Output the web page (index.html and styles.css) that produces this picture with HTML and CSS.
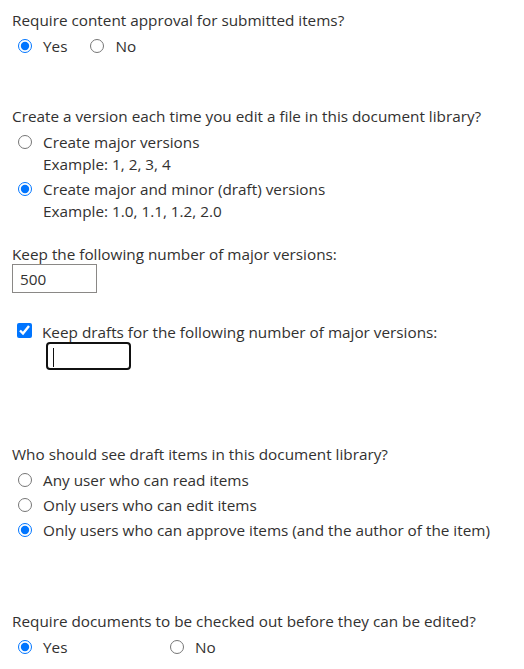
FILE: index.html
```html
<!DOCTYPE html>
<html lang="en">
<head>
    <meta charset="UTF-8">
    <meta name="viewport" content="width=device-width, initial-scale=1.0">
    <title>Versioning Settings</title>
    <link rel="stylesheet" href="styles.css">
</head>
<body>
    <form class="settings">
        <!-- Content approval -->
        <section class="setting setting-approval">
            <div class="question">Require content approval for submitted items?</div>
            <div class="choices">
                <label class="choice"><input type="radio" name="approval" checked> Yes</label>
                <label class="choice"><input type="radio" name="approval"> No</label>
            </div>
        </section>

        <!-- Versioning -->
        <section class="setting setting-versions">
            <div class="question">Create a version each time you edit a file in this document library?</div>
            <div class="option-group">
                <label class="choice"><input type="radio" name="versions"> Create major versions</label>
                <div class="example">Example: 1, 2, 3, 4</div>
            </div>
            <div class="option-group">
                <label class="choice"><input type="radio" name="versions" checked> Create major and minor (draft) versions</label>
                <div class="example">Example: 1.0, 1.1, 1.2, 2.0</div>
            </div>
        </section>

        <!-- Limits -->
        <section class="setting setting-limits">
            <div class="field-label">Keep the following number of major versions:</div>
            <input class="field" type="text" value="500">
            <label class="check"><input type="checkbox" checked> Keep drafts for the following number of major versions:</label>
            <div class="field field-focus"><span class="caret"></span></div>
        </section>

        <!-- Draft security -->
        <section class="setting setting-drafts">
            <div class="question">Who should see draft items in this document library?</div>
            <label class="choice"><input type="radio" name="drafts"> Any user who can read items</label>
            <label class="choice"><input type="radio" name="drafts"> Only users who can edit items</label>
            <label class="choice"><input type="radio" name="drafts" checked> Only users who can approve items (and the author of the item)</label>
        </section>

        <!-- Check out -->
        <section class="setting setting-checkout">
            <div class="question">Require documents to be checked out before they can be edited?</div>
            <div class="choices choices-wide">
                <label class="choice"><input type="radio" name="checkout" checked> Yes</label>
                <label class="choice"><input type="radio" name="checkout"> No</label>
            </div>
        </section>
    </form>
</body>
</html>
```

FILE: styles.css
```css
/* General Styles */
* {
    margin: 0;
    padding: 0;
    box-sizing: border-box;
}

body {
    background: #ffffff;
    color: #323130;
    font-family: 'Open Sans', 'Noto Sans', sans-serif;
    font-size: 15.3px;
    padding: 8px 12px;
}

.settings {
    display: flex;
    flex-direction: column;
}

.question,
.field-label {
    line-height: 25px;
    white-space: nowrap;
}

/* Radio rows */
.choice {
    display: flex;
    align-items: center;
    gap: 11px;
    height: 25px;
    padding-left: 6px;
    white-space: nowrap;
}

.choice input[type="radio"] {
    width: 14px;
    height: 14px;
    margin: 0;
    flex-shrink: 0;
}

.choices {
    display: flex;
    gap: 17px;
}

.choices-wide .choice:first-child {
    width: 135px;
}

/* Versioning */
.setting-versions {
    margin-top: 46px;
}

.option-group {
    margin-top: 2px;
}

.option-group + .option-group {
    margin-top: 3px;
}

.setting-versions .choice {
    height: 22px;
}

.example {
    line-height: 22px;
    padding-left: 31px;
}

/* Limits */
.setting-limits {
    margin-top: 22px;
    display: flex;
    flex-direction: column;
    align-items: flex-start;
}

.setting-limits .field-label {
    line-height: 20px;
}

.field {
    width: 85px;
    height: 29px;
    border: 1px solid #8a8886;
    padding: 0 7px;
    font: inherit;
    color: #323130;
    background: #ffffff;
}

.check {
    display: flex;
    align-items: center;
    gap: 10px;
    height: 20px;
    margin-top: 29px;
    padding-left: 5px;
    white-space: nowrap;
}

.check input {
    width: 15px;
    height: 15px;
    margin: 0 0 3px 0;
}

.field-focus {
    margin-left: 34px;
    height: 28px;
    border: 2px solid #111111;
    border-radius: 4px;
    padding: 4px 5px 0;
}

.caret {
    display: block;
    width: 1px;
    height: 19px;
    background: #111111;
}

/* Draft security */
.setting-drafts {
    margin-top: 72px;
}

/* Check out */
.setting-checkout {
    margin-top: 67px;
}
```
